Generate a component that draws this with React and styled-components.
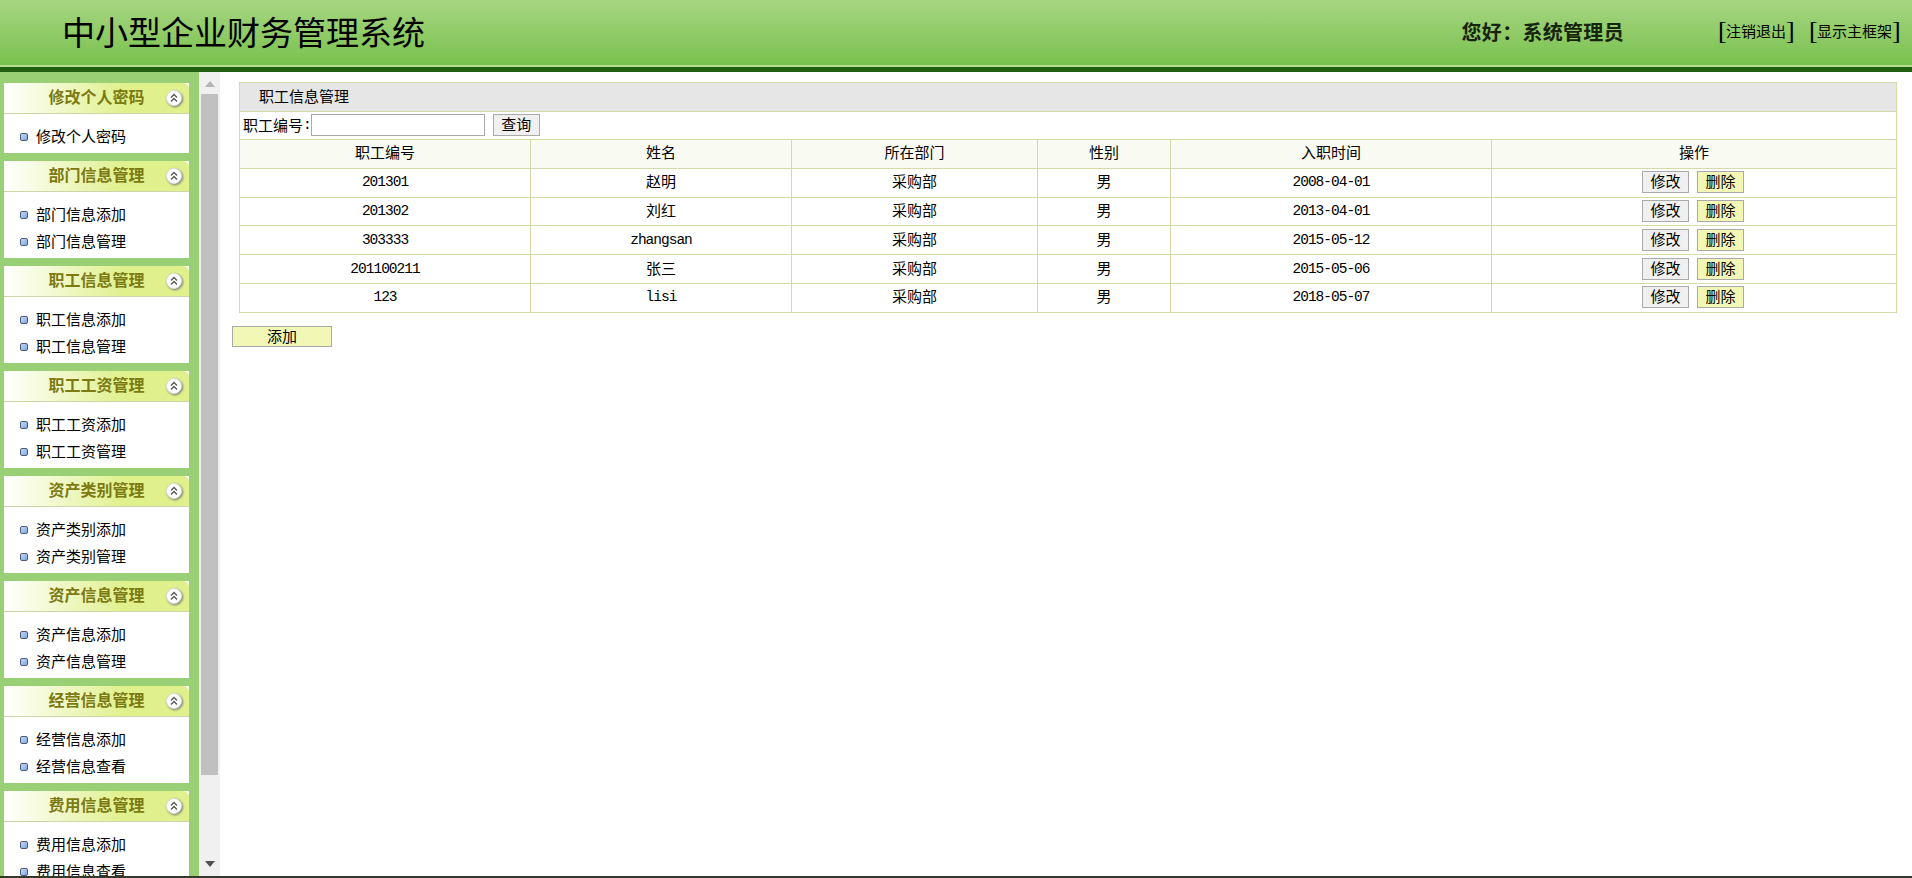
import React from 'react';
import styled, { createGlobalStyle } from 'styled-components';

const GlobalStyle = createGlobalStyle`
	html, body {
		margin: 0;
		padding: 0;
		height: 100%;
		overflow: hidden;
		background: #fff;
		color: #000;
		font-family: "Noto Sans CJK SC", "Liberation Sans", sans-serif;
		font-size: 15px;
	}
	* {
		box-sizing: border-box;
	}
`;

const Page = styled.div`
	width: 100%;
	height: 878px;
	display: flex;
	flex-direction: column;
	overflow: hidden;
`;

const Header = styled.header`
	flex: none;
	height: 72px;
	display: flex;
	align-items: center;
	padding: 0 12px 6px 62px;
	background: linear-gradient(#a7d582, #7ac24f 64px);
	border-bottom: 5px solid #225f10;
	box-shadow: inset 0 -2px 0 #b4dc95;
`;

const SystemName = styled.h1`
	margin: 0;
	font-size: 33px;
	line-height: 40px;
	font-weight: 400;
	white-space: nowrap;
`;

const Greeting = styled.div`
	margin-left: auto;
	padding-top: 2px;
	font-size: 20px;
	letter-spacing: 0.3px;
	font-weight: 700;
	color: #16240c;
`;

const TopLinks = styled.nav`
	display: flex;
	gap: 15px;
	margin-left: 94px;
`;

const TopLink = styled.a`
	display: flex;
	align-items: center;
	font-size: 15px;
	line-height: 22px;
	color: #000;
`;

const Bracket = styled.span`
	width: 8px;
	text-align: ${(props) => (props.$close ? 'right' : 'left')};
	font-family: "Liberation Serif", serif;
	font-size: 26px;
	font-weight: 400;
	line-height: 22px;
`;

const Body = styled.div`
	flex: 1;
	min-height: 0;
	display: flex;
`;

const Sidebar = styled.aside`
	flex: none;
	width: 199px;
	padding: 11px 10px 0 4px;
	background: #99cf75;
	overflow: hidden;
`;

const Panel = styled.section`
	margin-bottom: 8px;
	background: #fff;
`;

const PanelTitle = styled.div`
	position: relative;
	height: 31px;
	line-height: 26px;
	text-align: center;
	font-size: 16px;
	font-weight: 700;
	color: #7c7a12;
	background: linear-gradient(90deg, #fff, #e0f08c 65%);
	border-bottom: 1px solid #cdd6a8;
	border-radius: 6px 6px 0 0;
`;

const Collapse = styled.svg`
	position: absolute;
	right: 7px;
	top: 7px;
	filter: drop-shadow(1px 1px 1px #777);
`;

const PanelBody = styled.ul`
	margin: 0;
	padding: 8px 0 4px 16px;
	list-style: none;
`;

const MenuItem = styled.li`
	display: flex;
	align-items: center;
	height: 27px;
	gap: 8px;
	font-size: 15px;
	white-space: nowrap;
`;

const Bullet = styled.i`
	flex: none;
	width: 8px;
	height: 8px;
	margin-top: 2px;
	border: 1px solid #4f5b70;
	border-radius: 2px;
	background: linear-gradient(135deg, #c4d8f8, #7fa6e8);
`;

const ScrollTrack = styled.div`
	flex: none;
	width: 21px;
	display: flex;
	flex-direction: column;
	align-items: center;
	padding: 9px 0 9px;
	background: #f0f0f0;
`;

const ScrollThumb = styled.div`
	width: 17px;
	height: 681px;
	margin: 7px 0 auto;
	background: #c0c0c0;
`;

const Main = styled.main`
	flex: 1;
	min-width: 0;
	padding: 10px 16px 0 12px;
`;

const InfoTable = styled.table`
	width: 1657px;
	margin-left: 7px;
	table-layout: fixed;
	border-collapse: collapse;
	font-size: 15px;
	td, th {
		border: 1px solid #d4daa9;
		padding: 0 0 3px;
		font-weight: 400;
		height: 28.8px;
		line-height: 20px;
		text-align: center;
		vertical-align: middle;
	}
`;

const ColumnSize = styled.col`
	width: ${(props) => props.$w}px;
`;

const TitleCell = styled.td`
	&& {
		height: 29px;
		text-align: left;
		padding-left: 19px;
		background: #e6e6e6;
	}
`;

const SearchCell = styled.td`
	&& {
		height: 28px;
		text-align: left;
		padding: 0 0 2px 3px;
	}
`;

const SearchRow = styled.div`
	display: flex;
	align-items: center;
`;

const SearchInput = styled.input`
	width: 174px;
	height: 22px;
	padding: 0 2px;
	border: 1px solid #aaa;
	background: #fff;
	outline: none;
`;

const HeadRow = styled.tr`
	background: #f9faf1;
`;

const Mono = styled.span`
	font-family: "Liberation Mono", monospace;
	font-size: 14.5px;
	letter-spacing: -1px;
`;

const ActionCell = styled.td`
	&& {
		padding: 0 2px 2px 0;
	}
`;

const Button = styled.button`
	width: ${(props) => props.$w || 47}px;
	height: 22px;
	margin-left: ${(props) => props.$gap || 0}px;
	padding: 0 0 2px;
	border: 1px solid #aaa;
	background: ${(props) => (props.$yellow ? '#f2f7b5' : '#f0f0f0')};
	color: #000;
	font-family: inherit;
	font-size: 15px;
	line-height: 18px;
	vertical-align: middle;
`;

const AddButton = styled(Button)`
	display: block;
	height: 21px;
	margin-top: 13px;
`;

const BottomStrip = styled.div`
	flex: none;
	height: 2px;
	background: #333a2b;
`;

const menus = [
	{ title: '修改个人密码', items: ['修改个人密码'] },
	{ title: '部门信息管理', items: ['部门信息添加', '部门信息管理'] },
	{ title: '职工信息管理', items: ['职工信息添加', '职工信息管理'] },
	{ title: '职工工资管理', items: ['职工工资添加', '职工工资管理'] },
	{ title: '资产类别管理', items: ['资产类别添加', '资产类别管理'] },
	{ title: '资产信息管理', items: ['资产信息添加', '资产信息管理'] },
	{ title: '经营信息管理', items: ['经营信息添加', '经营信息查看'] },
	{ title: '费用信息管理', items: ['费用信息添加', '费用信息查看'] },
];

const columns = [
	{ label: '职工编号', width: 291 },
	{ label: '姓名', width: 261 },
	{ label: '所在部门', width: 246 },
	{ label: '性别', width: 133 },
	{ label: '入职时间', width: 321 },
	{ label: '操作', width: 405 },
];

const staff = [
	{ id: '201301', name: '赵明', dept: '采购部', sex: '男', date: '2008-04-01' },
	{ id: '201302', name: '刘红', dept: '采购部', sex: '男', date: '2013-04-01' },
	{ id: '303333', name: <Mono>zhangsan</Mono>, dept: '采购部', sex: '男', date: '2015-05-12' },
	{ id: '201100211', name: '张三', dept: '采购部', sex: '男', date: '2015-05-06' },
	{ id: '123', name: <Mono>lisi</Mono>, dept: '采购部', sex: '男', date: '2018-05-07' },
];

function CollapseIcon() {
	return (
		<Collapse width="16" height="16" viewBox="0 0 16 16">
			<circle cx="8" cy="8" r="7.5" fill="#fff" stroke="#ddd" />
			<path d="M5 7.5 8 4.5 11 7.5M5 11.5 8 8.5 11 11.5" fill="none" stroke="#555" strokeWidth="1.3" />
		</Collapse>
	);
}

function App() {
	return (
		<Page>
			<GlobalStyle />
			<Header>
				<SystemName>中小型企业财务管理系统</SystemName>
				<Greeting>您好：系统管理员</Greeting>
				<TopLinks>
					<TopLink><Bracket>[</Bracket>注销退出<Bracket $close>]</Bracket></TopLink>
					<TopLink><Bracket>[</Bracket>显示主框架<Bracket $close>]</Bracket></TopLink>
				</TopLinks>
			</Header>
			<Body>
				<Sidebar>
					{menus.map((menu) => (
						<Panel key={menu.title}>
							<PanelTitle>
								{menu.title}
								<CollapseIcon />
							</PanelTitle>
							<PanelBody>
								{menu.items.map((item) => (
									<MenuItem key={item}>
										<Bullet />
										{item}
									</MenuItem>
								))}
							</PanelBody>
						</Panel>
					))}
				</Sidebar>
				<ScrollTrack>
					<svg width="10" height="6" viewBox="0 0 10 6">
						<path d="M5 0 10 6H0Z" fill="#b4b4b4" />
					</svg>
					<ScrollThumb />
					<svg width="10" height="6" viewBox="0 0 10 6">
						<path d="M0 0H10L5 6Z" fill="#505050" />
					</svg>
				</ScrollTrack>
				<Main>
					<InfoTable>
						<colgroup>
							{columns.map((col) => (
								<ColumnSize key={col.label} $w={col.width} />
							))}
						</colgroup>
						<tbody>
							<tr>
								<TitleCell colSpan={6}>职工信息管理</TitleCell>
							</tr>
							<tr>
								<SearchCell colSpan={6}>
									<SearchRow>
										职工编号<Mono>:</Mono>
										<SearchInput />
										<Button $gap={8}>查询</Button>
									</SearchRow>
								</SearchCell>
							</tr>
							<HeadRow>
								{columns.map((col) => (
									<th key={col.label}>{col.label}</th>
								))}
							</HeadRow>
							{staff.map((row) => (
								<tr key={row.id}>
									<td><Mono>{row.id}</Mono></td>
									<td>{row.name}</td>
									<td>{row.dept}</td>
									<td>{row.sex}</td>
									<td><Mono>{row.date}</Mono></td>
									<ActionCell>
										<Button>修改</Button>
										<Button $yellow $gap={8}>删除</Button>
									</ActionCell>
								</tr>
							))}
						</tbody>
					</InfoTable>
					<AddButton $yellow $w={100}>添加</AddButton>
				</Main>
			</Body>
			<BottomStrip />
		</Page>
	);
}

export default App;
